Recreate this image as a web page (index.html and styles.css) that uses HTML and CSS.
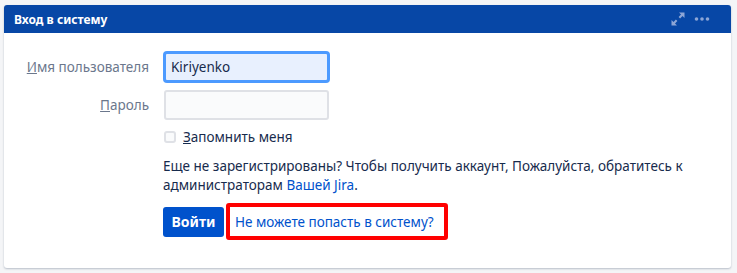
FILE: index.html
```html
<!DOCTYPE html>
<html lang="ru">
<head>
<meta charset="utf-8">
<title>Вход в систему</title>
<link rel="stylesheet" href="styles.css">
</head>
<body>
<div class="panel">
  <div class="panel-header">
    <h2 class="panel-title">Вход в систему</h2>
    <div class="panel-tools">
      <svg class="tool-icon" width="16" height="16" viewBox="0 0 16 16" aria-hidden="true">
        <path d="M9 1.5h5.5v5.5l-2-2-2.4 2.4-1.5-1.5 2.4-2.4z" fill="currentColor"/>
        <path d="M7 14.5h-5.5v-5.5l2 2 2.4-2.4 1.5 1.5-2.4 2.4z" fill="currentColor"/>
      </svg>
      <svg class="tool-icon" width="16" height="16" viewBox="0 0 16 16" aria-hidden="true">
        <circle cx="2.5" cy="8" r="1.8" fill="currentColor"/>
        <circle cx="8" cy="8" r="1.8" fill="currentColor"/>
        <circle cx="13.5" cy="8" r="1.8" fill="currentColor"/>
      </svg>
    </div>
  </div>
  <form class="login-form">
    <label class="field-label" for="user"><u>И</u>мя пользователя</label>
    <input class="text-input focused" id="user" type="text" value="Kiriyenko">
    <label class="field-label" for="pass"><u>П</u>ароль</label>
    <input class="text-input" id="pass" type="password">
    <div class="field-wrap checkbox-row">
      <span class="checkbox"></span>
      <span class="checkbox-label"><u>З</u>апомнить меня</span>
    </div>
    <div class="field-wrap note">
      <div class="note-line">Еще не зарегистрированы? Чтобы получить аккаунт, Пожалуйста, обратитесь к</div>
      <div class="note-line">администраторам <a href="#" class="link">Вашей Jira</a>.</div>
    </div>
    <div class="field-wrap actions">
      <button type="button" class="btn-primary">Войти</button>
      <span class="highlight"><a href="#" class="link">Не можете попасть в систему?</a></span>
    </div>
  </form>
</div>
</body>
</html>
```
FILE: styles.css
```css
html, body {
  margin: 0;
  padding: 0;
}
body {
  background: #f4f5f7;
  padding: 5px 6px 5px 4px;
  font-family: "Noto Sans", "Open Sans", sans-serif;
  font-size: 13.5px;
  color: #172b4d;
}
.panel {
  background: #fff;
  border-radius: 3px;
  box-shadow: 0 1px 2px rgba(9, 30, 66, 0.25);
  height: 263px;
  overflow: hidden;
}
.panel-header {
  height: 28px;
  background: #0747a6;
  display: flex;
  align-items: center;
  justify-content: space-between;
  padding: 0 21px 0 10px;
}
.panel-title {
  margin: 0;
  color: #fff;
  font-size: 12px;
  font-weight: 700;
}
.panel-tools {
  display: flex;
  align-items: center;
  gap: 8px;
  color: #8da6d6;
}
.tool-icon {
  display: block;
}
.login-form {
  display: grid;
  grid-template-columns: 145px 167px;
  column-gap: 14px;
  row-gap: 8px;
  align-items: center;
  padding: 19px 0 0 0;
}
.field-label {
  text-align: right;
  color: #6b778c;
}
.text-input {
  box-sizing: border-box;
  width: 165px;
  height: 30px;
  margin-left: 1px;
  border: 2px solid #dfe1e6;
  border-radius: 3px;
  background: #fafbfc;
  font: inherit;
  color: #172b4d;
  padding: 0 5px;
  outline: none;
}
.text-input.focused {
  border-color: #4c9aff;
  background: #e8f0fe;
  box-shadow: 0 0 0 1px #4c9aff;
}
.field-wrap {
  grid-column: 2 / span 1;
  width: 560px;
}
.checkbox-row {
  display: flex;
  align-items: center;
  gap: 7px;
  padding-left: 1px;
  color: #172b4d;
}
.checkbox {
  width: 8px;
  height: 8px;
  border: 2px solid #dfe1e6;
  border-radius: 3px;
  background: #fafbfc;
}
.note {
  margin: 3px 0 0 0;
  line-height: 19px;
}
.note-line {
  white-space: nowrap;
}
.link {
  color: #0052cc;
  text-decoration: none;
}
.actions {
  display: flex;
  align-items: center;
  gap: 2px;
}
.btn-primary {
  width: 61px;
  height: 30px;
  border: none;
  border-radius: 3px;
  background: #0052cc;
  color: #fff;
  font: inherit;
  font-size: 14px;
  font-weight: 700;
  padding: 0;
}
.highlight {
  display: flex;
  align-items: center;
  height: 29px;
  border: 4px solid #ff0000;
  border-radius: 3px;
  padding: 0 10px 0 5px;
}
```
